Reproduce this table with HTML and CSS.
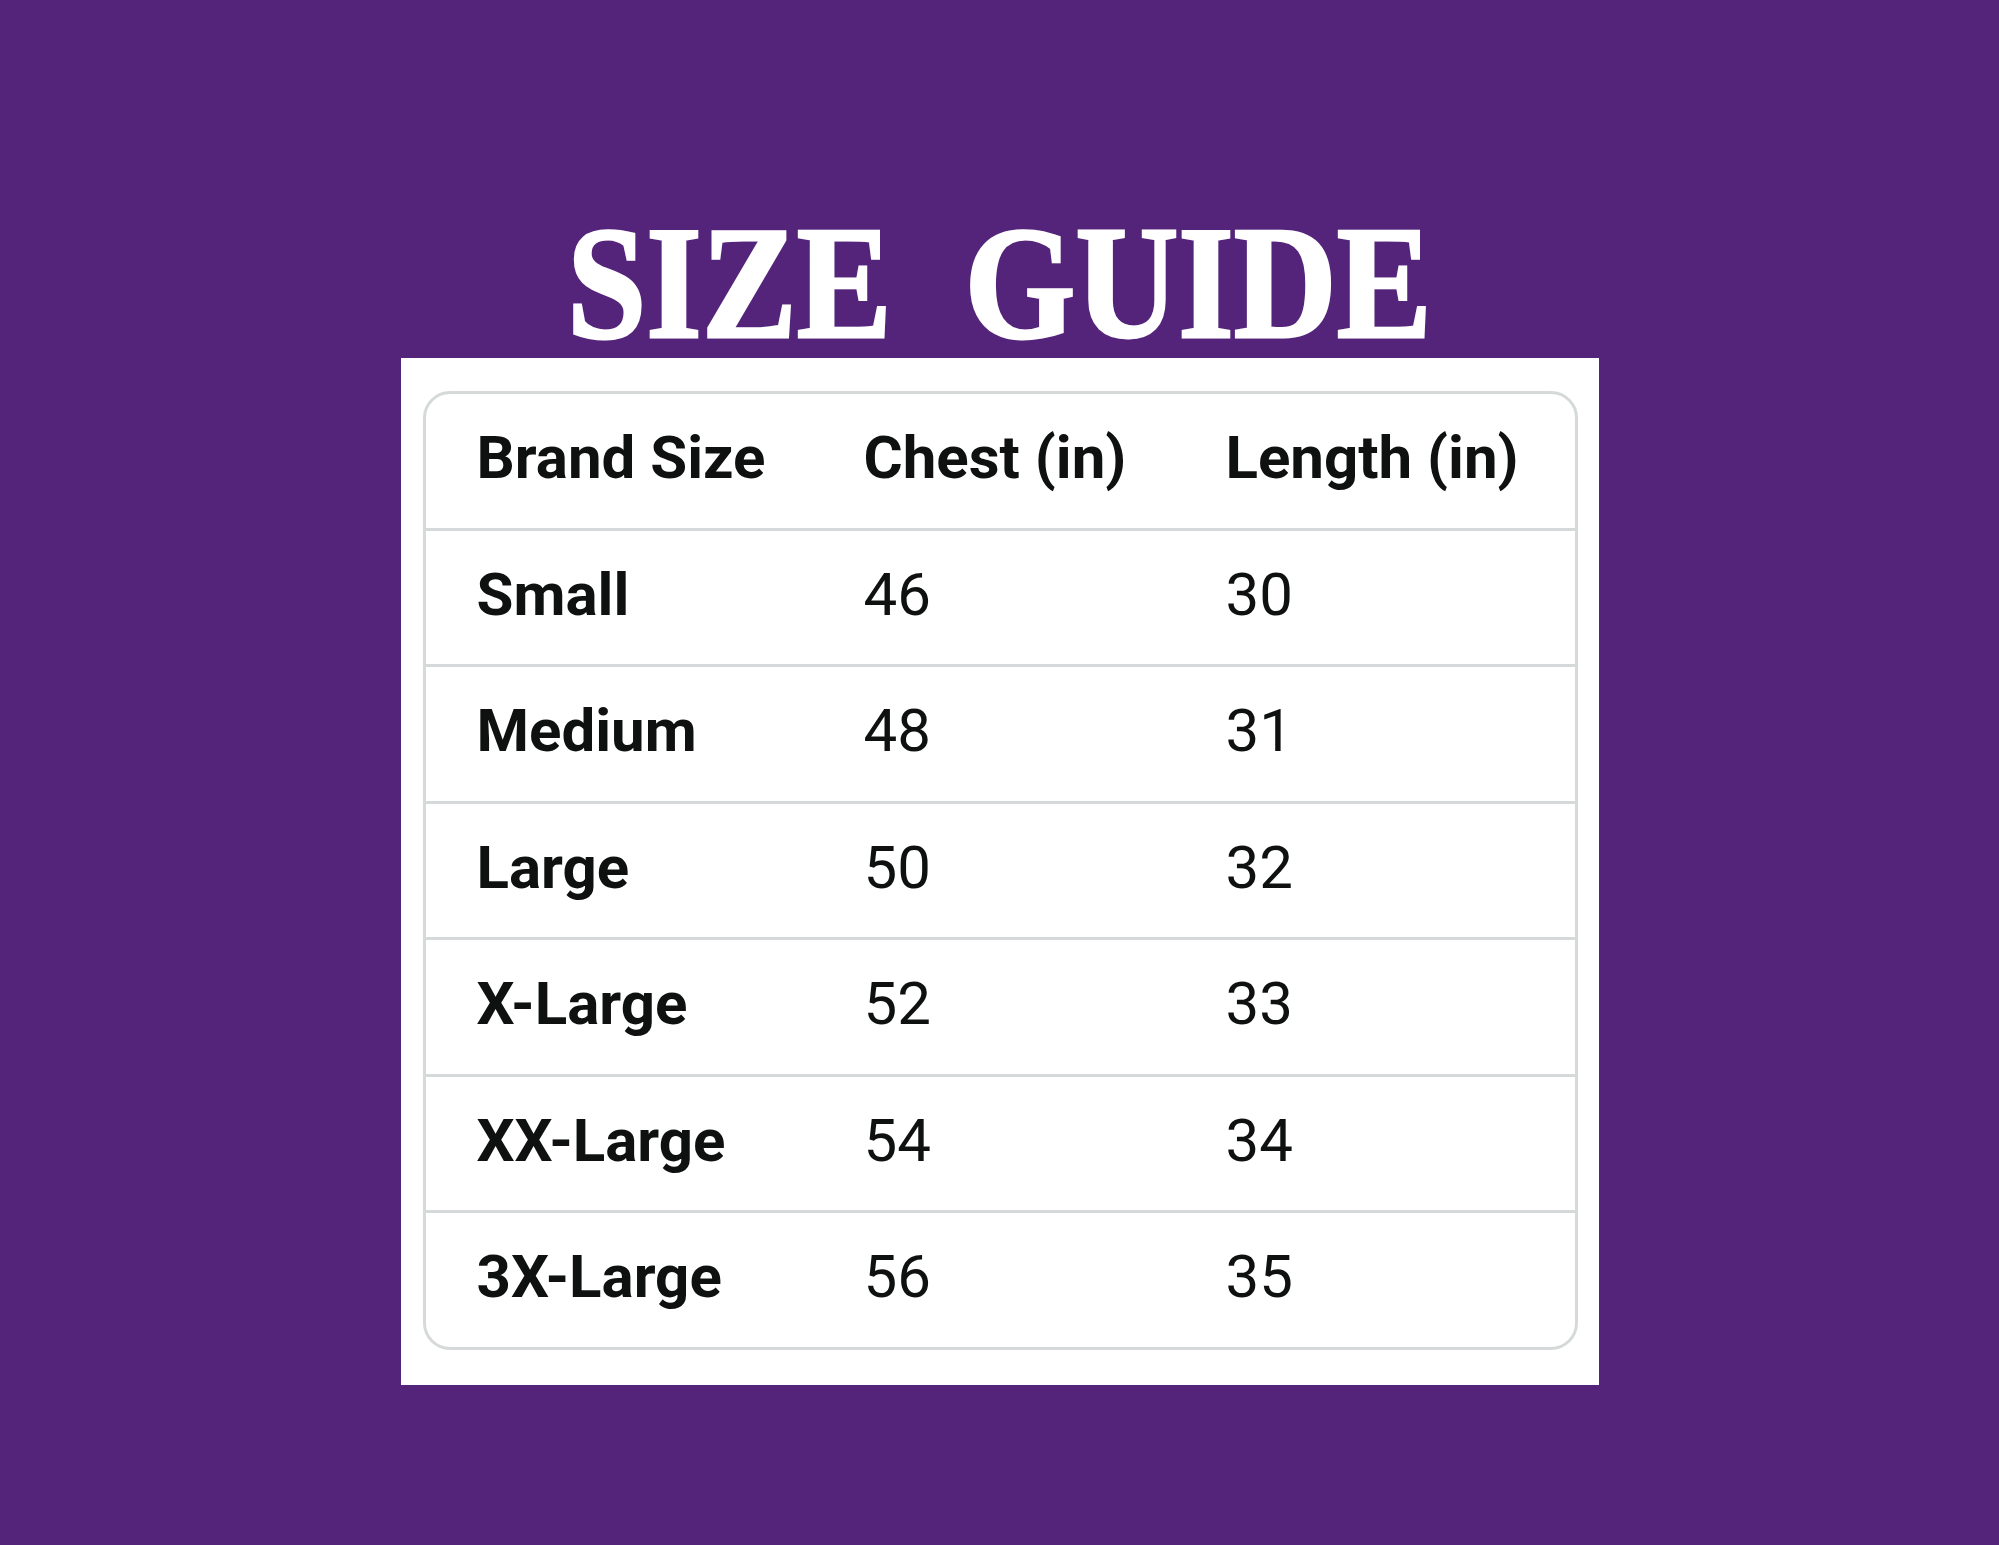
FILE: index.html
```html
<!DOCTYPE html>
<html lang="en">
<head>
<meta charset="utf-8">
<title>Size Guide</title>
<link rel="stylesheet" href="styles.css">
</head>
<body>
<main class="page">
  <h1 class="title"><span class="title-text">SIZE GUIDE</span></h1>
  <section class="panel">
    <div class="table">
      <div class="row head">
        <div class="cell strong">Brand Size</div>
        <div class="cell strong">Chest (in)</div>
        <div class="cell strong">Length (in)</div>
      </div>
      <div class="row">
        <div class="cell strong">Small</div>
        <div class="cell">46</div>
        <div class="cell">30</div>
      </div>
      <div class="row">
        <div class="cell strong">Medium</div>
        <div class="cell">48</div>
        <div class="cell">31</div>
      </div>
      <div class="row">
        <div class="cell strong">Large</div>
        <div class="cell">50</div>
        <div class="cell">32</div>
      </div>
      <div class="row">
        <div class="cell strong">X-Large</div>
        <div class="cell">52</div>
        <div class="cell">33</div>
      </div>
      <div class="row">
        <div class="cell strong">XX-Large</div>
        <div class="cell">54</div>
        <div class="cell">34</div>
      </div>
      <div class="row">
        <div class="cell strong">3X-Large</div>
        <div class="cell">56</div>
        <div class="cell">35</div>
      </div>
    </div>
  </section>
</main>
</body>
</html>
```

FILE: styles.css
```css
html, body {
  margin: 0;
  padding: 0;
}

body {
  background: #54247b;
  width: 1999px;
  height: 1545px;
  overflow: hidden;
}

.page {
  display: flex;
  flex-direction: column;
  align-items: center;
  padding-top: 208px;
}

.title {
  margin: 0;
  height: 150px;
  line-height: 150px;
  font-family: "Liberation Serif", "DejaVu Serif", serif;
  font-weight: 700;
  font-size: 162px;
  color: #ffffff;
  text-align: center;
  white-space: nowrap;
}

.title-text {
  display: inline-block;
  transform: scaleX(0.88);
  transform-origin: center;
  word-spacing: 42px;
  -webkit-text-stroke: 3px #ffffff;
}

.panel {
  box-sizing: border-box;
  width: 1198px;
  background: #ffffff;
  padding: 33px 21px 35px 22px;
}

.table {
  border: 3px solid #d5d9d9;
  border-radius: 27px;
  overflow: hidden;
  font-family: Roboto, "Noto Sans", sans-serif;
  color: #0f1111;
}

.row {
  box-sizing: border-box;
  display: grid;
  grid-template-columns: 387px 362px 1fr;
  align-items: center;
  height: 136.5px;
  padding-left: 51px;
  padding-bottom: 5px;
  border-top: 3px solid #d5d9d9;
}

.row.head {
  height: 133.5px;
  border-top: none;
}

.cell {
  font-size: 60px;
  font-weight: 400;
  line-height: 1;
  white-space: nowrap;
}

.cell.strong {
  font-weight: 700;
}
```
